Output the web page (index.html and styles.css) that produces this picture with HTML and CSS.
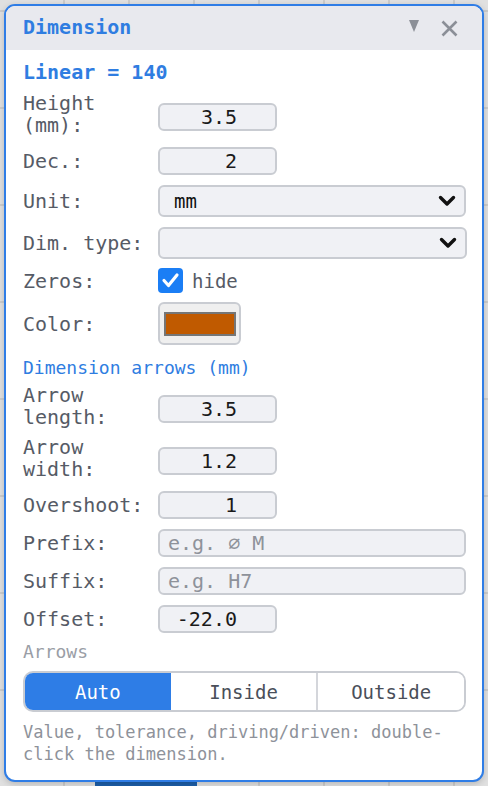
FILE: index.html
```html
<!DOCTYPE html>
<html lang="en">
  <head>
    <meta charset="UTF-8" />
    <meta name="viewport" content="width=device-width, initial-scale=1.0" />
    <title>Dimension</title>
    <link rel="stylesheet" href="styles.css">
  </head>
  <body>
    <div class="shape"></div>
    <div id="panel">
      <div class="head">
        <span class="title">Dimension</span>
        <svg class="collapse" width="10" height="12" viewBox="0 0 10 12"><polygon points="0,0 10,0 5,12" fill="#8b8f97"/></svg>
        <svg class="close" width="17" height="17" viewBox="0 0 17 17"><path d="M1.5 1.5 L15.5 15.5 M15.5 1.5 L1.5 15.5" stroke="#8b8f97" stroke-width="2.6" fill="none"/></svg>
      </div>
      <div class="body">
        <div class="kind">Linear = 140</div>

        <div class="row r1">
          <label class="lbl two">Height<br>(mm):</label>
          <input class="num" type="text" value="3.5">
        </div>
        <div class="row after-two">
          <label class="lbl">Dec.:</label>
          <input class="num" type="text" value="2">
        </div>
        <div class="row">
          <label class="lbl">Unit:</label>
          <div class="sel"><span>mm</span><svg width="18" height="12" viewBox="0 0 18 12"><polyline points="2.5,2.5 9,9 15.5,2.5" fill="none" stroke="#111" stroke-width="3.4" stroke-linecap="round" stroke-linejoin="round"/></svg></div>
        </div>
        <div class="row">
          <label class="lbl">Dim. type:</label>
          <div class="sel wide"><span></span><svg width="18" height="12" viewBox="0 0 18 12"><polyline points="2.5,2.5 9,9 15.5,2.5" fill="none" stroke="#111" stroke-width="3.4" stroke-linecap="round" stroke-linejoin="round"/></svg></div>
        </div>
        <div class="row tight">
          <label class="lbl">Zeros:</label>
          <span class="check"><svg width="25" height="25" viewBox="0 0 25 25"><polyline points="6,12.5 10.5,17.5 19,7" fill="none" stroke="#fff" stroke-width="3.2" stroke-linecap="round" stroke-linejoin="round"/></svg></span>
          <span class="hide">hide</span>
        </div>
        <div class="row tight">
          <label class="lbl">Color:</label>
          <div class="swatch"><div class="chip"></div></div>
        </div>

        <div class="sub">Dimension arrows (mm)</div>

        <div class="row r7">
          <label class="lbl two">Arrow<br>length:</label>
          <input class="num" type="text" value="3.5">
        </div>
        <div class="row">
          <label class="lbl two">Arrow<br>width:</label>
          <input class="num" type="text" value="1.2">
        </div>
        <div class="row after-two">
          <label class="lbl">Overshoot:</label>
          <input class="num" type="text" value="1">
        </div>
        <div class="row">
          <label class="lbl">Prefix:</label>
          <input class="txt" type="text" placeholder="e.g. ⌀ M">
        </div>
        <div class="row">
          <label class="lbl">Suffix:</label>
          <input class="txt" type="text" placeholder="e.g. H7">
        </div>
        <div class="row">
          <label class="lbl">Offset:</label>
          <input class="num" type="text" value="-22.0">
        </div>

        <div class="cap">Arrows</div>
        <div class="seg">
          <button class="on">Auto</button>
          <button>Inside</button>
          <button>Outside</button>
        </div>
        <p class="hint">Value, tolerance, driving/driven: double-click the dimension.</p>
      </div>
    </div>
  </body>
</html>
```

FILE: styles.css
```css
* {
  margin: 0;
  padding: 0;
  box-sizing: border-box;
}
body {
  width: 488px;
  height: 786px;
  overflow: hidden;
  position: relative;
  font-family: "DejaVu Sans Mono", monospace;
  background-color: #e0e0e0;
  background-image:
    repeating-linear-gradient(90deg, transparent 0 63px, #cbcbcb 63px 65px),
    repeating-linear-gradient(0deg, transparent 0 95px, #cbcbcb 95px 97px);
}
.shape {
  position: absolute;
  left: 95px;
  top: 770px;
  width: 102px;
  height: 30px;
  border-radius: 12px;
  background: #1c5ea8;
}
#panel {
  position: relative;
  margin: 4px;
  width: 480px;
  border: 2px solid #2f7de6;
  border-radius: 11px;
  background: #fff;
  overflow: hidden;
  box-shadow: 0 2px 6px rgba(0, 0, 0, 0.18);
}
.head {
  height: 44px;
  display: flex;
  align-items: center;
  padding: 0 24px 0 17px;
  background: #e8e9ee;
}
.title {
  font-size: 20px;
  line-height: 24px;
  font-weight: bold;
  color: #2f7de1;
  padding-bottom: 3px;
}
.collapse {
  margin-left: auto;
  margin-bottom: 4px;
}
.close {
  margin-left: 22px;
}
.body {
  padding: 10px 16px 15px 17px;
  display: flex;
  flex-direction: column;
}
.kind {
  font-size: 20px;
  line-height: 24px;
  font-weight: bold;
  color: #2f7de1;
}
.row {
  display: flex;
  align-items: center;
  margin-top: 10px;
}
.row.r1 {
  margin-top: 12px;
}
.row.r7,
.row.after-two,
.row.tight {
  margin-top: 9px;
}
.lbl {
  width: 135px;
  flex: none;
  font-size: 20px;
  line-height: 22px;
  color: #565b66;
}
.lbl.two {
  margin: -4px 0 2px;
}
.num,
.txt {
  height: 28px;
  border: 2px solid #c9ccd2;
  border-radius: 6px;
  background: #f0f1f5;
  font-family: "DejaVu Sans Mono", monospace;
  font-size: 20px;
  color: #1a1a1a;
  outline: none;
}
.num {
  width: 119px;
  text-align: right;
  padding: 0 38px 0 0;
}
.txt {
  flex: 1;
  padding: 0 0 0 8px;
}
.txt::placeholder {
  color: #8e929a;
}
.sel {
  flex: 1;
  height: 32px;
  border: 2px solid #c9ccd2;
  border-radius: 6px;
  background: #f0f1f5;
  display: flex;
  align-items: center;
  justify-content: space-between;
  padding: 0 8px 0 14px;
  font-size: 19px;
  color: #111;
}
.sel.wide {
  margin-right: -1px;
}
.check {
  width: 25px;
  height: 25px;
  border-radius: 4px;
  background: #1b7ef5;
  display: flex;
}
.hide {
  margin-left: 9px;
  font-size: 19px;
  color: #565b66;
}
.swatch {
  width: 83px;
  height: 43px;
  border: 2px solid #c9ccd2;
  border-radius: 6px;
  background: #efefef;
  padding: 8px 4px 0 4px;
}
.chip {
  width: 72px;
  height: 24px;
  border: 2px solid #767676;
  background: #c05a00;
}
.sub {
  margin-top: 12px;
  font-size: 18px;
  line-height: 22px;
  color: #2f7de1;
}
.cap {
  margin-top: 8px;
  font-size: 18px;
  line-height: 22px;
  color: #9a9ea6;
}
.seg {
  margin-top: 8px;
  height: 41px;
  display: flex;
  border: 2px solid #c9ccd2;
  border-radius: 10px;
  overflow: hidden;
}
.seg button {
  flex: 1;
  border: none;
  border-left: 2px solid #d4d6db;
  background: #fff;
  font-family: "DejaVu Sans Mono", monospace;
  font-size: 19px;
  color: #4a4f5a;
}
.seg button:first-child {
  border-left: none;
}
.seg button.on {
  background: #2e7de6;
  color: #fff;
}
.seg button.on + button {
  border-left: none;
}
.hint {
  margin-top: 9px;
  font-size: 17px;
  line-height: 22px;
  color: #8e929a;
}
```
